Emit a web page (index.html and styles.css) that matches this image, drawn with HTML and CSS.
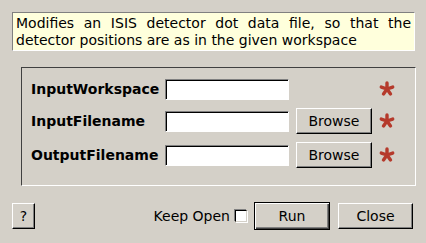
FILE: index.html
```html
<!DOCTYPE html>
<html lang="en">
<head>
    <meta charset="UTF-8">
    <title>SaveDetectorsGrouping</title>
    <link rel="stylesheet" href="styles.css">
</head>
<body>
    <div class="dialog">
        <p class="description">Modifies an ISIS detector dot data file, so that the detector positions are as in the given workspace</p>

        <div class="props">
            <label class="prop-label">InputWorkspace</label>
            <input class="prop-input" type="text">
            <span></span>
            <svg class="star" viewBox="-8 -8 16 16"><path d="M0 0L0 -6M0 0L5.7 -1.9M0 0L3.5 4.9M0 0L-3.5 4.9M0 0L-5.7 -1.9"/></svg>

            <label class="prop-label">InputFilename</label>
            <input class="prop-input" type="text">
            <button class="btn browse">Browse</button>
            <svg class="star" viewBox="-8 -8 16 16"><path d="M0 0L0 -6M0 0L5.7 -1.9M0 0L3.5 4.9M0 0L-3.5 4.9M0 0L-5.7 -1.9"/></svg>

            <label class="prop-label">OutputFilename</label>
            <input class="prop-input" type="text">
            <button class="btn browse">Browse</button>
            <svg class="star" viewBox="-8 -8 16 16"><path d="M0 0L0 -6M0 0L5.7 -1.9M0 0L3.5 4.9M0 0L-3.5 4.9M0 0L-5.7 -1.9"/></svg>
        </div>

        <div class="button-row">
            <button class="btn help">?</button>
            <span class="spacer"></span>
            <label class="keep-open">Keep Open <span class="checkbox"></span></label>
            <button class="btn run">Run</button>
            <button class="btn close">Close</button>
        </div>
    </div>
</body>
</html>
```

FILE: styles.css
```css
html, body {
    margin: 0;
    padding: 0;
}
body {
    width: 426px;
    height: 243px;
    background-color: #d4d0c8;
    font-family: "DejaVu Sans", sans-serif;
    font-size: 14px;
    color: #000;
    overflow: hidden;
}
.dialog {
    padding: 12px 11px 0 12px;
}
.description {
    margin: 0;
    height: 35px;
    padding: 2px 3px 0 3px;
    background-color: #ffffdc;
    border: 1px solid;
    border-color: #808080 #fff #fff #808080;
    line-height: 17px;
    text-align: justify;
}
.props {
    display: grid;
    grid-template-columns: 127px 124px 76px 16px;
    grid-template-rows: 22px 26px 26px;
    column-gap: 7px;
    row-gap: 8px;
    align-items: center;
    margin: 16px -1px 0 9px;
    padding: 10px 9px 17px 9px;
    border: 1px solid;
    border-color: #404040 #fff #fff #404040;
}
.prop-label {
    font-weight: bold;
    white-space: nowrap;
}
.prop-input {
    box-sizing: border-box;
    width: 124px;
    height: 21px;
    margin: 0;
    padding: 0 2px;
    background: #fff;
    border: 1px solid;
    border-color: #808080 #fff #fff #808080;
    box-shadow: inset 1px 1px #000;
    outline: none;
}
.btn {
    box-sizing: border-box;
    height: 26px;
    margin: 0;
    padding: 0;
    background-color: #d4d0c8;
    font-family: "DejaVu Sans", sans-serif;
    font-size: 14px;
    color: #000;
    border: 1px solid;
    border-color: #fff #000 #000 #fff;
    box-shadow: inset -1px -1px #808080;
}
.browse {
    width: 76px;
}
.star {
    width: 16px;
    height: 16px;
}
.star path {
    fill: none;
    stroke: #b53a2c;
    stroke-width: 3.4;
    stroke-linecap: round;
}
.button-row {
    display: flex;
    align-items: center;
    margin-top: 16px;
    padding-right: 2px;
}
.help {
    width: 23px;
}
.spacer {
    flex: 1;
}
.keep-open {
    display: flex;
    align-items: center;
    gap: 5px;
    margin-right: 7px;
}
.checkbox {
    box-sizing: border-box;
    width: 12px;
    height: 12px;
    background: #fff;
    border: 1px solid;
    border-color: #000 #d4d0c8 #d4d0c8 #000;
    box-shadow: -1px -1px #808080, 1px 1px #fff;
}
.run {
    width: 76px;
    height: 28px;
    margin-right: 8px;
    border-color: #000;
    box-shadow: inset 1px 1px #fff, inset -1px -1px #404040, inset -2px -2px #808080;
}
.close {
    width: 75px;
}
```
